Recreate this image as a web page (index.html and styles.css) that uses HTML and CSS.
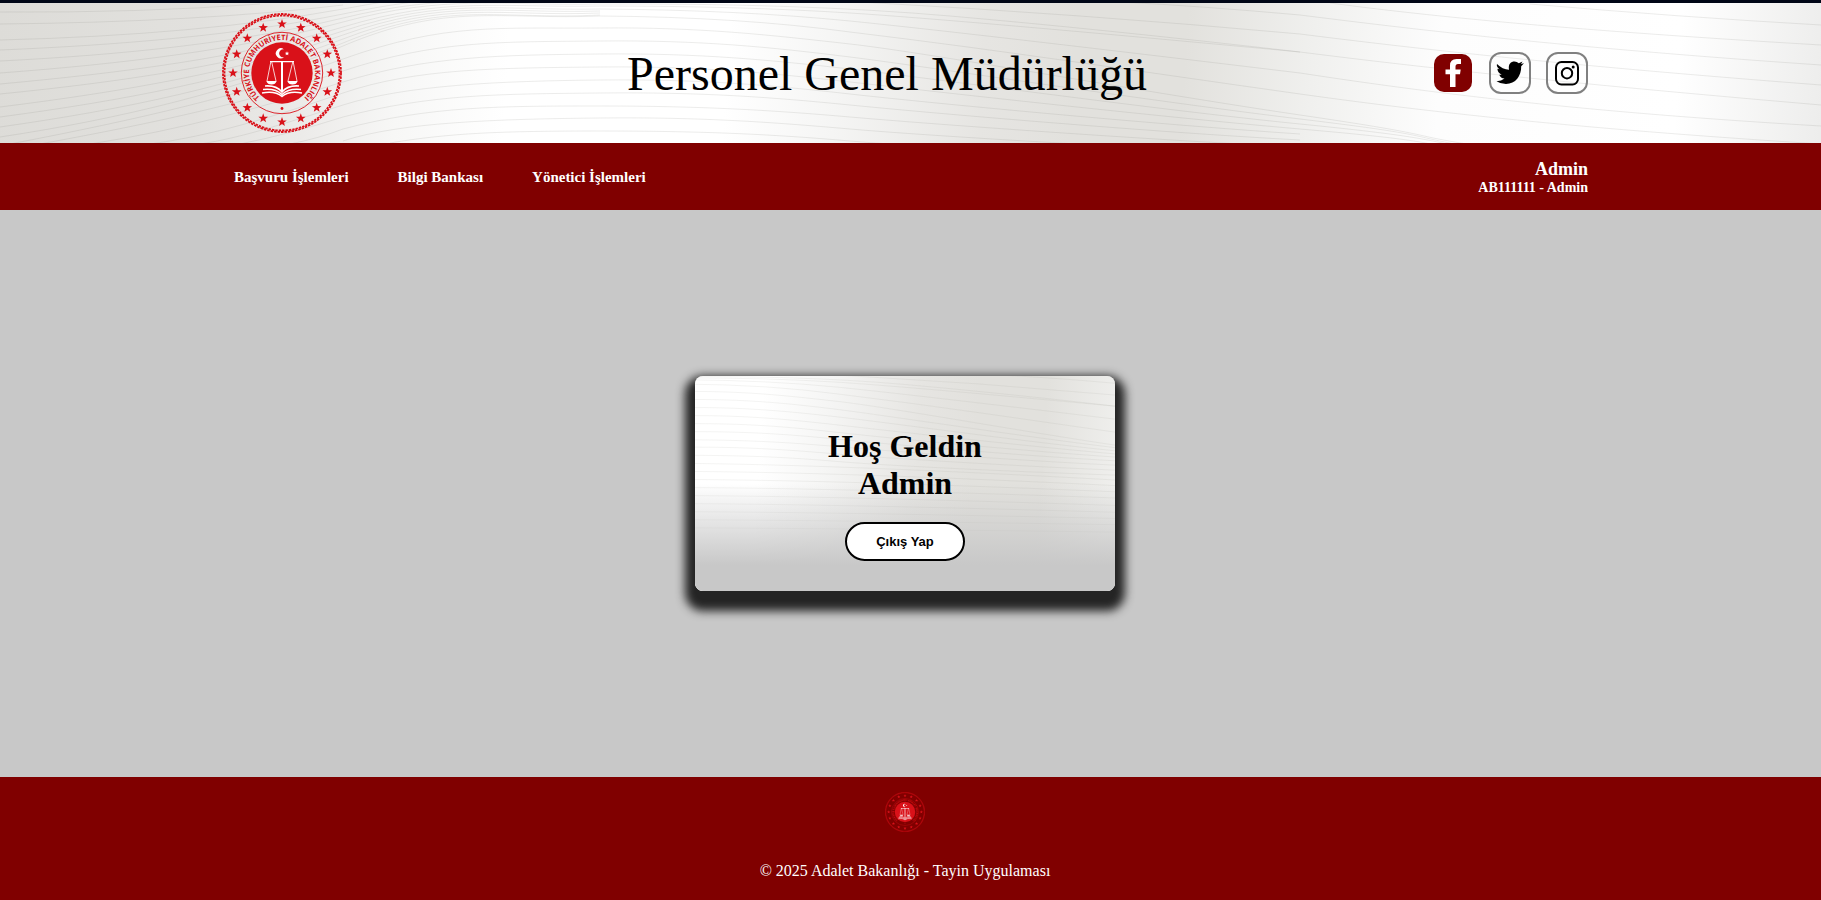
FILE: index.html
```html
<!DOCTYPE html>
<html lang="tr">
<head>
<meta charset="utf-8">
<title>Personel Genel Müdürlüğü</title>
<link rel="stylesheet" href="styles.css">
</head>
<body>
<svg class="defs" aria-hidden="true">
  <defs>
    <linearGradient id="silk" gradientUnits="userSpaceOnUse" x1="0" y1="0" x2="1821" y2="120">
      <stop offset="0" stop-color="#dddcd8"/>
      <stop offset=".11" stop-color="#e2e1de"/>
      <stop offset=".17" stop-color="#ecebe9"/>
      <stop offset=".22" stop-color="#f7f7f6"/>
      <stop offset=".28" stop-color="#fff"/>
      <stop offset=".4" stop-color="#fff"/>
      <stop offset=".46" stop-color="#f5f5f4"/>
      <stop offset=".54" stop-color="#e6e5e2"/>
      <stop offset=".59" stop-color="#e2e1dd"/>
      <stop offset=".65" stop-color="#e2e1dd"/>
      <stop offset=".72" stop-color="#f0f0ee"/>
      <stop offset=".79" stop-color="#fdfdfd"/>
      <stop offset=".92" stop-color="#fff"/>
      <stop offset="1" stop-color="#ededec"/>
    </linearGradient>
    <linearGradient id="fade" x1="0" y1="0" x2="0" y2="1">
      <stop offset=".5" stop-color="#c8c8c8" stop-opacity="0"/>
      <stop offset=".88" stop-color="#c8c8c8"/>
    </linearGradient>
    <g id="waves">
      <rect width="1821" height="420" fill="url(#silk)"/>
      <g fill="none" stroke="#8a8a84" stroke-opacity=".16">
        <path d="M0 12Q140 13 260 4"/>
        <path d="M0 24Q200 22 343 5"/>
        <path d="M0 40Q200 35 343 9T440 1"/>
        <path d="M0 50C120 45 240 35 343 14S440 4 470 1"/>
        <path d="M0 61C120 55 240 43 343 18S500 4 560 2"/>
        <path d="M0 73C120 64 240 50 343 22S500 6 600 4Q800 3 950 16T1300 52C1450 71 1600 86 1821 105"/>
        <path d="M0 84C120 73 240 58 343 27S500 8 600 6Q740 6 850 13T1300 52"/>
        <path d="M0 94C120 82 240 65 343 31S500 11 600 9Q740 10 850 21T1300 73C1450 96 1600 113 1821 126"/>
        <path d="M0 107C120 92 240 72 343 35S500 14 600 11"/>
        <path d="M0 117C120 101 240 79 343 39S500 17 600 13"/>
        <path d="M0 127C120 110 240 86 343 43S500 20 600 15"/>
        <path d="M0 137C120 119 240 90 343 46S500 20 600 16Q740 17 850 32C1000 50 1150 73 1300 94S1600 130 1821 144"/>
        <path d="M10 144C140 119 240 96 343 59S500 29 600 28S770 35 850 44S1150 93 1300 115S1400 134 1480 146"/>
        <path d="M40 144C160 122 250 102 343 71S500 42 600 41S770 47 850 57S1150 101 1300 119S1400 136 1490 150"/>
        <path d="M90 144C180 130 260 108 343 82S500 55 600 54S770 60 850 69S1150 109 1300 124S1420 141 1500 154"/>
        <path d="M150 144C210 136 270 118 343 93S500 68 600 67S770 73 850 82S1150 116 1300 129S1420 144 1500 158"/>
        <path d="M200 144C240 138 280 125 343 105S500 81 600 80S770 85 850 94S1150 124 1300 134"/>
        <path d="M240 144Q290 134 343 117C430 94 500 94 600 93S770 97 850 105S1150 132 1300 140"/>
        <path d="M290 144Q320 138 343 129C430 106 500 106 600 106S770 110 850 117S1150 140 1300 147"/>
        <path d="M343 141C400 122 500 119 600 118S770 122 850 129S1150 149 1300 155"/>
        <path d="M390 143C450 133 500 131 600 131S770 134 850 141S1150 158 1300 163"/>
        <path d="M860 2Q1080 14 1300 34C1450 53 1600 68 1821 85"/>
        <path d="M1120 2Q1200 6 1300 15C1450 34 1600 50 1821 65"/>
        <path d="M1330 3C1450 19 1600 32 1821 45"/>
        <path d="M1530 4Q1680 17 1821 25"/>
        <path d="M600 144Q850 146 1300 171"/>
        <path d="M600 157Q850 158 1300 180"/>
        <path d="M600 170Q850 171 1300 190"/>
        <path d="M600 183Q850 184 1300 200"/>
        <path d="M600 196Q850 197 1300 212"/>
        <path d="M600 209Q850 210 1300 223"/>
        <path d="M600 222Q850 223 1300 233"/>
        <path d="M600 235Q850 236 1300 243"/>
        <path d="M600 248Q850 249 1300 255"/>
      </g>
    </g>
    <path id="star" d="M0-5 1.200-1.600 4.800-1.500 2 .6 2.900 4 0 2-2.900 4-2 .6-4.800-1.500-1.200-1.600Z"/>
    <path id="ring" d="M60 93A33 33 0 0 1 60 27A33 33 0 0 1 60 93"/>
    <symbol id="seal" viewBox="0 0 120 120">
      <g fill="none" stroke="#d91119">
        <circle cx="60" cy="60" r="59" stroke-width="1.800" stroke-dasharray="2.500 1"/>
        <circle cx="60" cy="60" r="57.500" stroke-width="1.800" stroke-dasharray="2.440 .97" stroke-dashoffset="1"/>
        <circle cx="60" cy="60" r="40.700" stroke-width=".9"/>
      </g>
      <g fill="#d91119">
        <circle cx="60" cy="60" r="30.700"/>
        <circle cx="60" cy="95.500" r="1.400"/>
        <g transform="translate(60 60)">
          <use href="#star" y="-49"/>
          <use href="#star" y="49"/>
          <use href="#star" x="49"/>
          <use href="#star" x="-49"/>
          <use href="#star" x="18.800" y="-45.300"/>
          <use href="#star" x="-18.800" y="-45.300"/>
          <use href="#star" x="18.800" y="45.300"/>
          <use href="#star" x="-18.800" y="45.300"/>
          <use href="#star" x="34.700" y="-34.700"/>
          <use href="#star" x="-34.700" y="-34.700"/>
          <use href="#star" x="34.700" y="34.700"/>
          <use href="#star" x="-34.700" y="34.700"/>
          <use href="#star" x="45.300" y="-18.800"/>
          <use href="#star" x="-45.300" y="-18.800"/>
          <use href="#star" x="45.300" y="18.800"/>
          <use href="#star" x="-45.300" y="18.800"/>
        </g>
        <text class="seal-text"><textPath href="#ring" startOffset="50%">TÜRKİYE CUMHURİYETİ ADALET BAKANLIĞI</textPath></text>
      </g>
      <g fill="#fff">
        <path d="M62 36.400A5 5 0 1 0 62 44.200A4 4 0 1 1 62 36.400Z"/>
        <path d="M65 38.300 65.600 39.700 67.200 39.800 66 40.800 66.400 42.300 65 41.500 63.600 42.300 64 40.800 62.800 39.800 64.400 39.700Z"/>
        <path d="M48 48H72V49.300H61V78L60 80 59 78V49.300H48Z"/>
        <path d="M44.300 68H54.700Q53.500 71.500 49.500 71.500T44.300 68ZM65.300 68H75.700Q74.500 71.500 70.500 71.500T65.300 68Z"/>
      </g>
      <g fill="none" stroke="#fff">
        <path stroke-width=".8" d="M49 48 45 68M49.500 48 54 68M71 48 66 68M71 48 75 68"/>
        <path stroke-width="1.500" d="M43 73Q54 72 60 79Q66 72 77 73M41 76.500Q53 75 60 81.500Q67 75 79 76.500M40 80Q53 77.500 60 83.500Q67 77.500 80 80"/>
      </g>
    </symbol>
  </defs>
</svg>

<header class="banner">
  <svg class="waves" viewBox="0 3 1821 140" preserveAspectRatio="xMidYMin slice" aria-hidden="true"><use href="#waves"/></svg>
  <div class="container banner-row">
    <svg class="logo" role="img" aria-label="Adalet Bakanlığı"><use href="#seal"/></svg>
    <p class="title">Personel Genel Müdürlüğü</p>
    <div class="social">
      <a class="social-link facebook" href="#" aria-label="Facebook">
        <svg viewBox="0 0 38 38"><path fill="#fff" d="M16 33V20.300H11.500V15.500H16V11.500Q16 5 22.500 5H27V10H24Q21.500 10 21.500 12.500V15.500H26.700L26 20.300H21.500V33Z"/></svg>
      </a>
      <a class="social-link" href="#" aria-label="Twitter">
        <svg viewBox="0 0 38 38"><path d="M6 10Q11.500 15.500 18 15.700C17 10 20 7.500 23.500 7.500Q26 7.500 27.800 9.300L31.500 7.600 30 10 33 9.300 30.200 12.300C30.500 22 24.500 30 15 30Q9.500 30 5.500 27.200Q10.500 27.200 13.500 24.600Q9.500 24.200 8.300 20.700H10.700Q6.500 18.800 6.400 14.800L8.500 15.300Q5 12.500 6 10Z"/></svg>
      </a>
      <a class="social-link" href="#" aria-label="Instagram">
        <svg viewBox="0 0 38 38"><g fill="none" stroke="#000" stroke-width="2"><rect x="8" y="8" width="22" height="22.500" rx="5.500"/><circle cx="19" cy="19.200" r="5.200"/></g><circle cx="25.200" cy="13" r="1.500"/></svg>
      </a>
    </div>
  </div>
</header>

<nav class="navbar">
  <div class="container navbar-row">
    <ul class="menu">
      <li><a href="#">Başvuru İşlemleri</a></li>
      <li><a href="#">Bilgi Bankası</a></li>
      <li><a href="#">Yönetici İşlemleri</a></li>
    </ul>
    <div class="user">
      <span class="user-name">Admin</span>
      <span class="user-id">AB111111 - Admin</span>
    </div>
  </div>
</nav>

<main class="content">
  <section class="card">
    <svg class="waves" viewBox="620 3 677 347" preserveAspectRatio="none" aria-hidden="true">
      <use href="#waves"/>
      <rect x="620" y="3" width="677" height="347" fill="url(#fade)"/>
    </svg>
    <h1 class="welcome">Hoş Geldin<br>Admin</h1>
    <button class="logout" type="button">Çıkış Yap</button>
  </section>
</main>

<footer class="footer">
  <svg class="footer-logo" role="img" aria-label="Adalet Bakanlığı"><use href="#seal"/></svg>
  <p>© 2025 Adalet Bakanlığı - Tayin Uygulaması</p>
</footer>
</body>
</html>
```
FILE: styles.css
```css
* {
  box-sizing: border-box;
}

body {
  --gutter: 11px;
  margin: 0;
  min-height: 100vh;
  display: flex;
  flex-direction: column;
  background: #c8c8c8;
  color: #000;
  font-family: "Liberation Serif", "Times New Roman", serif;
  font-size: 16px;
}

p,
ul,
h1 {
  margin: 0;
  padding: 0;
}

.defs {
  position: absolute;
  width: 0;
  height: 0;
}

.container {
  width: 100%;
  max-width: 1366px;
  margin: 0 auto;
}

.waves {
  position: absolute;
  inset: 0;
  width: 100%;
  height: 100%;
  z-index: -1;
}

.banner {
  position: relative;
  isolation: isolate;
  overflow: hidden;
  padding: 10px var(--gutter) 10px 0;
  border-top: 3px solid #000616;
}

.banner-row {
  display: flex;
  align-items: center;
  justify-content: space-between;
}

.logo {
  width: 120px;
  height: 120px;
}

.seal-text {
  font-family: "Open Sans", sans-serif;
  font-size: 7.5px;
  font-weight: 700;
  text-anchor: middle;
}

.title {
  padding-top: 2px;
  font-size: 48px;
  line-height: 56px;
}

.social {
  display: flex;
  gap: 15px;
}

.social-link {
  display: block;
  width: 42px;
  height: 42px;
  border: 2px solid #808080;
  border-radius: 12px;
}

.social-link svg {
  display: block;
  width: 100%;
  height: 100%;
}

.facebook {
  border-color: transparent;
  background: #800000 padding-box;
}

.navbar {
  padding: 16px var(--gutter) 14px 0;
  background: #800000;
  color: #fff;
  font-weight: 700;
}

.navbar-row {
  display: flex;
  align-items: center;
  justify-content: space-between;
}

.menu {
  display: flex;
  gap: 25px;
  list-style: none;
  font-size: 15px;
}

.menu a {
  padding: 8px 12px;
  color: inherit;
  text-decoration: none;
}

.user {
  display: flex;
  flex-direction: column;
  align-items: flex-end;
}

.user-name {
  font-size: 18px;
  line-height: 20px;
}

.user-id {
  font-size: 14px;
  line-height: 17px;
}

.content {
  flex: 1;
  display: flex;
  align-items: center;
  justify-content: center;
  padding: 0 var(--gutter) 20px 0;
}

.card {
  position: relative;
  isolation: isolate;
  display: flex;
  flex-direction: column;
  align-items: center;
  width: 420px;
  padding: 52px 30px 30px;
  border-radius: 8px;
  box-shadow: 0 10px 10px 10px #242424;
}

.card .waves {
  border-radius: 8px;
}

.welcome {
  margin-bottom: 20px;
  font-size: 32px;
  line-height: 37px;
  text-align: center;
}

.logout {
  width: 120px;
  height: 39px;
  border: 2px solid #000;
  border-radius: 20px;
  background: #fff;
  color: #000;
  font-family: "Liberation Sans", Arial, sans-serif;
  font-size: 13px;
  font-weight: 700;
}

.footer {
  display: flex;
  flex-direction: column;
  align-items: center;
  gap: 30px;
  padding: 15px var(--gutter) 20px 0;
  background: #800000;
  color: #fff;
  line-height: 18px;
}

.footer-logo {
  width: 40px;
  height: 40px;
}
```
